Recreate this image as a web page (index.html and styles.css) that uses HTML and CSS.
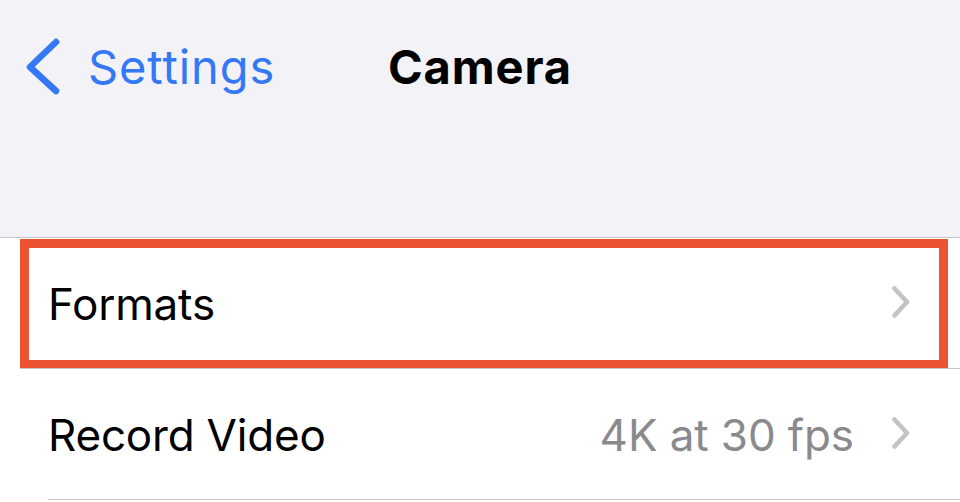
FILE: index.html
```html
<!DOCTYPE html>
<html>
<head>
<meta charset="utf-8">
<link rel="stylesheet" href="styles.css">
</head>
<body>
<header class="header">
  <nav class="navbar">
    <a class="back">
      <svg class="back-chevron" width="40" height="60" viewBox="0 0 40 60"><polyline points="32,6 6,31 32,55" fill="none" stroke="#3478f6" stroke-width="6.5" stroke-linecap="round" stroke-linejoin="round"/></svg>
      <span class="back-label">Settings</span>
    </a>
    <h1 class="title">Camera</h1>
  </nav>
</header>
<main class="list">
  <div class="row row-highlight">
    <span class="row-label">Formats</span>
    <span class="row-right">
      <svg class="chevron" width="18" height="32" viewBox="0 0 18 32"><polyline points="2.5,2.5 15,16 2.5,29.5" fill="none" stroke="#c4c4c7" stroke-width="4.6" stroke-linecap="round" stroke-linejoin="round"/></svg>
    </span>
    <div class="highlight-box"></div>
  </div>
  <div class="row">
    <span class="row-label">Record Video</span>
    <span class="row-right">
      <span class="row-value">4K at 30 fps</span>
      <svg class="chevron" width="18" height="32" viewBox="0 0 18 32"><polyline points="2.5,2.5 15,16 2.5,29.5" fill="none" stroke="#c4c4c7" stroke-width="4.6" stroke-linecap="round" stroke-linejoin="round"/></svg>
    </span>
  </div>
</main>
</body>
</html>
```

FILE: styles.css
```css
* { box-sizing: border-box; }
html, body {
  margin: 0;
  padding: 0;
  background: #ffffff;
  font-family: Inter, "Noto Sans", "Liberation Sans", sans-serif;
  width: 960px;
  height: 502px;
  overflow: hidden;
}
.header {
  height: 238px;
  background: #f2f2f7;
  border-bottom: 1px solid #c8c7cc;
}
.navbar {
  position: relative;
  height: 132px;
  display: flex;
  align-items: center;
  justify-content: center;
}
.back {
  position: absolute;
  left: 24px;
  top: 36px;
  display: flex;
  align-items: center;
  gap: 24px;
  color: #3478f6;
}
.back-label {
  font-size: 47px;
  letter-spacing: 0.9px;
}
.title {
  margin: 0;
  font-size: 47px;
  font-weight: 700;
  color: #000;
  letter-spacing: 0.9px;
}
.list {
  background: #fff;
}
.row {
  position: relative;
  height: 131px;
  display: flex;
  align-items: center;
  justify-content: space-between;
  padding: 0 50px 0 48px;
}
.row::after {
  content: "";
  position: absolute;
  left: 48px;
  right: 0;
  bottom: 0;
  height: 1px;
  background: #c8c7cc;
}
.row-highlight::after { left: 20px; }
.row-label {
  font-size: 44px;
  color: #000;
  letter-spacing: -0.2px;
}
.row-value {
  font-size: 44px;
  color: #8a8a8e;
  letter-spacing: -0.1px;
}
.row-right {
  display: flex;
  align-items: center;
  gap: 38px;
}
.chevron { display: block; margin-top: -3px; }
.highlight-box {
  position: absolute;
  left: 20px;
  top: 1px;
  width: 928px;
  height: 130px;
  border: 9.5px solid #ec5331;
  pointer-events: none;
}
```
